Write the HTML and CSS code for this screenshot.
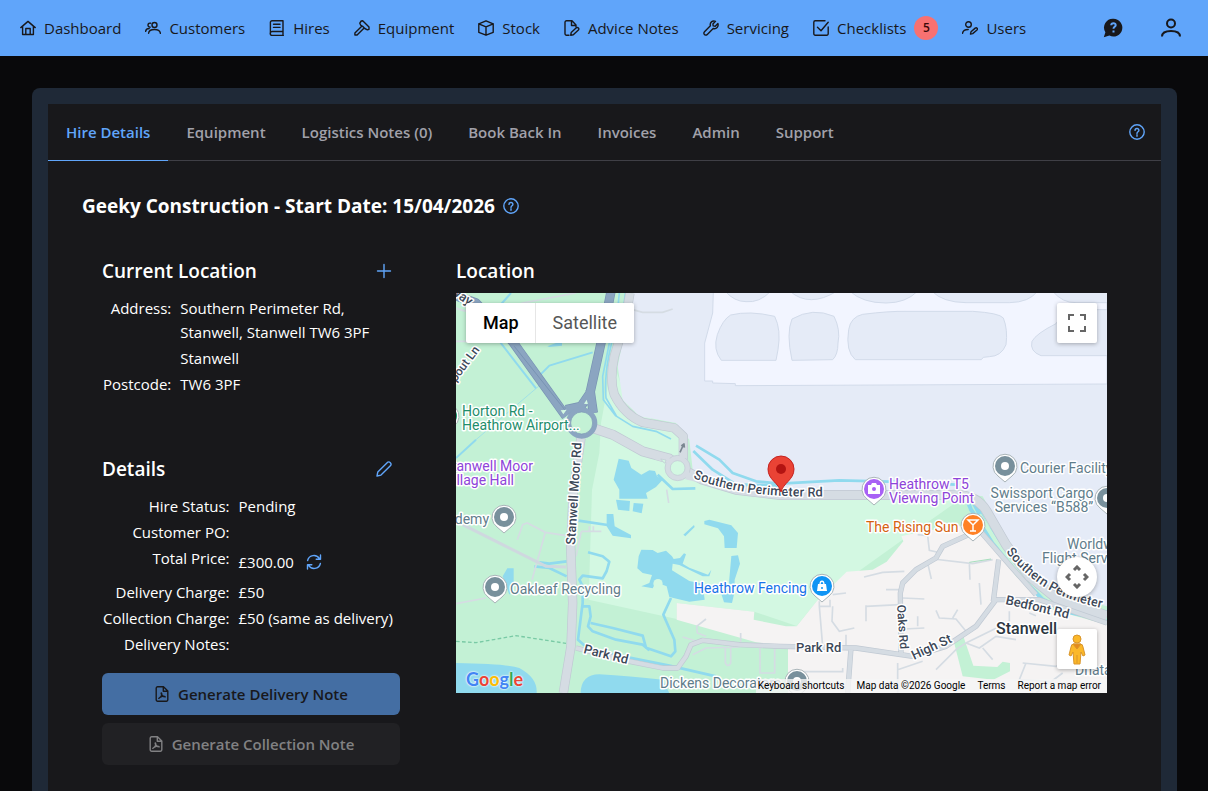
FILE: index.html
```html
<!DOCTYPE html>
<html lang="en">
<head>
    <meta charset="UTF-8">
    <meta name="viewport" content="width=device-width, initial-scale=1.0">
    <title>Hire Details</title>
    <link rel="stylesheet" href="styles.css">
</head>
<body>
    <header class="navbar">
        <nav class="nav-links">
            <a href="#"><svg class="icon" viewBox="0 0 16 16"><path d="M.8 7.6 8 1.4l7.200 6.200M2.600 6.300v8.200h10.800V6.300M5.800 14.500V8.500h4.400v6"/></svg>Dashboard</a>
            <a href="#"><svg class="icon" viewBox="0 0 16 16"><circle cx="9.500" cy="5" r="2.500"/><path d="M3.600 13.300c.2-2.400 2.200-3.800 5.900-3.800s5.600 1.400 5.900 3.800M5.600 3.200a2 2 0 1 0-.4 3.900M.6 11.300C.8 9.500 2 8.600 4.200 8.500"/></svg>Customers</a>
            <a href="#"><svg class="icon" viewBox="0 0 16 16"><path d="M14 11.500H3.200a2 2 0 0 0 0 4H14.300M14 15.300V.7H3a1.600 1.600 0 0 0-1.600 1.600v11.200M4.500 4.200h6.500M4.500 7.400h6.500"/></svg>Hires</a>
            <a href="#"><svg class="icon" viewBox="0 0 16 16"><path d="M8.700.8 15 7.100v2.200l-1.600.5-2.600-1.300-2.200-2.200-2-1.200-.8-1.900 1.400-2.200zM8 5.900.9 13v2h2.200l6.800-6.800"/></svg>Equipment</a>
            <a href="#"><svg class="icon" viewBox="0 0 16 16"><path d="m8 .8 7.200 3v8.500L8 15.200.8 12.300V3.800zM.8 3.800 8 6.900l7.200-3.100M8 6.900v8.300"/></svg>Stock</a>
            <a href="#"><svg class="icon" viewBox="0 0 16 16"><path d="M5 15.300H2.500a1.500 1.500 0 0 1-1.500-1.500V2.300A1.500 1.500 0 0 1 2.500.8H8L12 5v1.700M7.500 1v4.500H12M6.700 15.200l.5-2.600 5.100-4.800c1.600-1 3.300.8 2.100 2.200l-5.100 4.800z"/></svg>Advice Notes</a>
            <a href="#"><svg class="icon" viewBox="0 0 16 16"><path d="M12.500 1.300 9.900 3.900l.3 2 2 .3 2.700-2.700c1 3.100-1.500 5.900-4.700 5l-5.900 5.900c-1.900 1.900-4.700-.8-2.800-2.700l5.900-5.900c-.9-3.300 2-5.700 5.100-4.500z"/></svg>Servicing</a>
            <a href="#"><svg class="icon" viewBox="0 0 16 16"><path d="M12 .8H2.200A1.400 1.400 0 0 0 .8 2.200v11.600a1.400 1.400 0 0 0 1.400 1.400h11.600a1.400 1.400 0 0 0 1.400-1.400V7M4.500 7.300l3.500 3.400 7.200-8.400"/></svg>Checklists<span class="badge">5</span></a>
            <a href="#"><svg class="icon" viewBox="0 0 16 16"><circle cx="6.500" cy="4.500" r="2.800"/><path d="M.6 13.300c.2-2.400 2.300-3.700 5.600-3.800M8.500 14l.5-2.200 4.200-3.700c1.500-1 2.900.6 1.800 1.900l-4.300 3.600z"/></svg>Users</a>
        </nav>
        <div class="nav-actions">
            <button type="button" aria-label="Help">
                <svg class="icon-lg" viewBox="0 0 20 20"><path class="solid" d="M10.500.7a9 8.900 0 1 1-4.100 16.900L.8 19.300l1.600-5A8.900 8.900 0 0 1 10.500.7z"/><path class="mark" d="M8.200 7.300c.1-2.900 4.700-2.700 4.500 0-.1 1.600-2.200 1.500-2.200 3.500M10.500 12.600v1.800"/></svg>
            </button>
            <button type="button" aria-label="Account">
                <svg class="icon-lg stroke-2" viewBox="0 0 20 20"><circle cx="10" cy="5.500" r="4"/><path d="M1 18.500c.1-4.200 3.200-5.500 9-5.500s8.900 1.300 9 5.500"/></svg>
            </button>
        </div>
    </header>

    <main class="page">
        <div class="card">
            <div class="panel">
                <div class="tabs">
                    <a class="tab active" href="#">Hire Details</a>
                    <a class="tab" href="#">Equipment</a>
                    <a class="tab" href="#">Logistics Notes (0)</a>
                    <a class="tab" href="#">Book Back In</a>
                    <a class="tab" href="#">Invoices</a>
                    <a class="tab" href="#">Admin</a>
                    <a class="tab" href="#">Support</a>
                    <button type="button" class="icon-btn tabs-help" aria-label="Help"><svg class="icon" viewBox="0 0 16 16"><circle cx="8" cy="8" r="7.200"/><path d="M6 6.400c.1-2.700 4.100-2.500 3.900 0C9.800 7.800 8 7.700 8 9.500M8 10.800v1.400"/></svg></button>
                </div>

                <div class="content">
                    <h1>Geeky Construction - Start Date: 15/04/2026
                        <button type="button" class="icon-btn" aria-label="Help"><svg class="icon" viewBox="0 0 16 16"><circle cx="8" cy="8" r="7.200"/><path d="M6 6.400c.1-2.700 4.100-2.500 3.900 0C9.800 7.800 8 7.700 8 9.500M8 10.800v1.400"/></svg></button>
                    </h1>

                    <div class="columns">
                        <div class="info">
                            <section>
                                <div class="section-head">
                                    <h2>Current Location</h2>
                                    <button type="button" class="icon-btn" aria-label="Add location"><svg class="icon" viewBox="0 0 16 16"><path d="M8 1.500v13M1.500 8h13"/></svg></button>
                                </div>
                                <dl>
                                    <dt>Address:</dt>
                                    <dd>Southern Perimeter Rd,<br>Stanwell, Stanwell TW6 3PF</dd>
                                    <dt></dt>
                                    <dd>Stanwell</dd>
                                    <dt>Postcode:</dt>
                                    <dd>TW6 3PF</dd>
                                </dl>
                            </section>

                            <section>
                                <div class="section-head">
                                    <h2>Details</h2>
                                    <button type="button" class="icon-btn" aria-label="Edit details"><svg class="icon" viewBox="0 0 16 16"><path d="m1 15 .8-4.100L11.400 1.400c2.100-1.500 4.600 1.100 3.200 3.200L5 14.100z"/></svg></button>
                                </div>
                                <dl>
                                    <dt>Hire Status:</dt>
                                    <dd>Pending</dd>
                                    <dt>Customer PO:</dt>
                                    <dd></dd>
                                    <dt>Total Price:</dt>
                                    <dd class="price">£300.00
                                        <button type="button" class="icon-btn" aria-label="Recalculate price"><svg class="icon" viewBox="0 0 16 16"><path d="M1.600 6.500C3 .8 10.500-.3 13.600 4.900M14.500 1v4.300h-4.300M14.400 9.500C13 15.200 5.500 16.300 2.400 11.100M1.500 15v-4.300h4.300"/></svg></button>
                                    </dd>
                                    <dt>Delivery Charge:</dt>
                                    <dd>£50</dd>
                                    <dt>Collection Charge:</dt>
                                    <dd>£50 (same as delivery)</dd>
                                    <dt>Delivery Notes:</dt>
                                    <dd></dd>
                                </dl>
                                <div class="buttons">
                                    <button type="button" class="btn btn-primary" disabled><svg class="icon" viewBox="0 0 16 16"><path d="M9.500.8H3.600a1.400 1.400 0 0 0-1.400 1.400v11.600a1.400 1.400 0 0 0 1.400 1.400h8.800a1.400 1.400 0 0 0 1.400-1.400V5zM9.300 1v4.300h4.400M4.800 12.400C7.500 11 8.500 8 7.400 6.900c-1 .8 1.500 4 3.800 4-.8-1.200-4.500-.8-6.400 1.500z"/></svg>Generate Delivery Note</button>
                                    <button type="button" class="btn btn-muted" disabled><svg class="icon" viewBox="0 0 16 16"><path d="M9.500.8H3.600a1.400 1.400 0 0 0-1.400 1.400v11.600a1.400 1.400 0 0 0 1.400 1.400h8.800a1.400 1.400 0 0 0 1.400-1.400V5zM9.300 1v4.300h4.400M4.800 12.400C7.500 11 8.500 8 7.400 6.900c-1 .8 1.500 4 3.800 4-.8-1.200-4.500-.8-6.400 1.500z"/></svg>Generate Collection Note</button>
                                </div>
                            </section>
                        </div>

                        <section class="location">
                            <div class="section-head">
                                <h2>Location</h2>
                            </div>
                            <div class="map">
                                <svg class="map-canvas" viewBox="0 0 651 400" preserveAspectRatio="xMidYMid slice">
                                    <defs>
                                        <g id="pin"><path class="pin-edge" d="M0 16-7 10A12 12 0 1 1 7 10z"/><circle r="10"/></g>
                                        <path id="r-moor" d="M119 252 126 140"/>
                                        <path id="r-south" d="M237 185Q290 207 380 203"/>
                                        <path id="r-south2" d="M550 259C576 291 601 307 660 318"/>
                                    </defs>

                                    <!-- land, water and roads, drawn at three times the map scale -->
                                    <svg width="651" height="400" viewBox="0 0 1953 1200">
                                        <rect width="1953" height="1200" fill="#c3f1d5"/>
                                        <path fill="#d3f8e2" d="M470 200 435 390 430 480 408 591 398 920 662 978V930L895 956 1022 999 1082 925 1340 740 1540 600 700 560 690 420 520 350z"/>
                                        <path fill="#f5f3f3" d="M662 930 895 956 893 980 990 1000H1022L1082 925 1172 836 1250 830 1292 806 1342 745 1336 730 1400 715 1540 695 1600 745 1680 850 1790 950 1953 995V1200H996V1058L900 1048 662 980z"/>
                                        <path fill="#c3f1d5" d="M972 1072H996V1200H972zM1492 1040 1522 1030 1552 1118 1624 1122 1640 1106 1662 1110V1135L1612 1160 1520 1150z"/>
                                        <path fill="#e5ebf7" d="M530 0 485 220 500 320 550 370 660 390 700 440 710 530 830 585 972 600H1500L1580 610 1640 720 1720 840 1800 900 1953 940V0z"/>
                                        <path fill="#f2f5ff" stroke="#d2dbea" stroke-width="3" d="M772 -5 770 60 746 150V264H770V270L838 272V278L1953 273V-5z"/>
                                        <g fill="#e5ebf7" stroke="#d2dbea" stroke-width="3">
                                            <path d="M796 202Q770 170 784 125 800 80 824 66 880 52 956 70 976 110 966 170L960 202z"/>
                                            <path d="M1008 202Q990 120 1008 78 1070 42 1134 70 1154 110 1146 150 1146 185 1130 200z"/>
                                            <path d="M1198 200Q1168 175 1178 110 1184 72 1220 64 1300 54 1350 55H1550Q1630 60 1642 75 1656 110 1650 155 1636 190 1600 191L1582 193 1576 200z"/>
                                            <path d="M1960 188H1755Q1720 175 1728 145 1740 122 1800 92 1820 55 1860 50H1960z"/>
                                            <path d="M808 -5Q835 26 870 26 910 30 944 -5zM1002 -5Q1060 45 1142 -5zM1182 -5Q1220 30 1290 30 1350 30 1384 -5zM1428 -5Q1460 28 1530 29H1660Q1720 28 1744 -5zM1790 -5Q1820 30 1860 29H1960V-5z"/>
                                        </g>

                                        <!-- water -->
                                        <g fill="#90daee">
                                            <path d="M0 1110Q150 1112 190 1125 245 1155 242 1200H0zM374 1200Q375 1145 430 1144 520 1150 620 1160L640 1200z"/>
                                            <path d="M488 497 518 503 526 525 556 545 580 532 597 534 603 550 620 560 600 582 570 600 575 617H490V590L473 560z"/>
                                            <path d="M480 620 522 624 520 654 486 650zM533 630 562 632 557 661 530 655zM452 663H472L476 700 525 726V736L470 728 452 700z"/>
                                            <path d="M556 770 590 771 605 780 630 773 648 790 653 798 672 795 684 781 690 784 680 812 700 824 756 845 766 830 760 850 740 850 670 816 650 812 648 832 700 864 740 872 746 920 700 926 640 912 632 880 600 868 590 886 556 880 580 870 588 846 560 840 544 826 548 790z"/>
                                            <path d="M745 684 760 680 826 697 846 720 842 765H806L804 730 786 706 745 694zM682 725 714 696 716 702 688 730zM826 789 846 787 852 812 836 860 835 900 828 930 804 928 795 900 818 880zM140 850 154 826H173V885L160 905z"/>
                                            <path d="M274 160 300 150H318V158L280 162z"/>
                                        </g>
                                        <circle cx="606" cy="872" r="14" fill="#d3f8e2"/>
                                        <g fill="none" stroke="#90daee" stroke-width="8" stroke-linejoin="round">
                                            <path d="M410 178 280 218 250 248M80 80 240 286M125 45 165 0M0 495 60 440" stroke-width="6"/>
                                            <path d="M60 440 250 278" stroke-width="2"/>
                                            <path d="M490 0 482 80 458 190Q445 260 450 315L482 370 530 400 600 415 645 438M508 0 500 70M460 150 440 250 442 320 480 370" stroke-width="5"/>
                                            <path d="M605 545 650 588 718 586M712 474 770 530 840 574 972 578M720 458 790 500 830 540 900 565 972 572 1150 562 1300 566 1500 575"/>
                                            <path d="M362 682 455 696M396 778 440 790 460 806 452 834 440 856 380 848 370 860 380 880V930L366 1040 400 1070 640 1118 780 1150M380 940H400L404 970 396 1000 410 1015 480 1040 560 1055 580 1072M404 990 470 1005 560 1028 570 1064 645 1090 658 1075 655 1040 622 965 645 915M250 808 280 812 332 805M235 820 280 825 332 850"/>
                                            <path d="M1525 600 1545 650 1580 700 1680 835 1760 920 1840 958 1953 982" stroke-width="12"/>
                                            <path d="M1552 625 1590 700 1650 770 1710 840 1780 900 1850 935 1953 960" stroke-width="14"/>
                                            <path stroke="#c9f5da" d="M1570 665 1620 745 1710 855 1790 925 1870 953 1953 975" stroke-width="12"/>
                                        </g>

                                        <!-- minor streets -->
                                        <g fill="none" stroke="#d5dce3" stroke-width="5">
                                            <path d="M0 45Q80 80 200 30L360 0M0 145H60M530 50 560 58H620L650 48M184 740 200 695 214 690 268 718 330 728M268 718 245 800 228 860M376 715H436M376 715 360 790M0 932 90 915M632 590 638 630M400 700V715M412 700V715"/>
                                            <path d="M1385 725 1415 728 1420 772 1455 780M1432 798 1550 812 1610 800M1414 806 1426 858M1540 810 1542 860M1224 852 1280 838 1345 835M1170 900 1130 905M1090 925V940L1100 1060M1090 940H1122V920M1130 940 1128 985 1150 1015 1195 1005M1170 1025V1060M1230 937V985M1230 940 1330 935M1290 890H1335M1340 915 1405 918M1440 952 1450 975 1500 978 1530 1015M1490 975 1505 950M1345 1008 1405 1005M1385 1000V970M1570 870 1575 935M1660 955V985M1720 960 1740 968"/>
                                            <path d="M1002 1136H1160V1125M1325 1110V1200M1325 1130 1400 1105M1440 1130 1500 1070 1530 1050 1620 1006M1530 1050 1570 1065 1620 1030 1680 1040M1580 1065 1610 1100M1700 1110 1800 1120 1840 1095M1710 1110 1690 1160 1780 1165M1740 1200 1820 1140"/>
                                            <path d="M750 978 722 1000 724 1020 750 1030M854 1020V1048M680 1032 720 1044M710 1085 750 1065 850 1062M808 1065V1110Q816 1125 824 1110V1065M912 1065V1140H956V1065"/>
                                        </g>
                                        <path d="M20 695 150 760 240 805 270 820 330 822" fill="none" stroke="#cfd8df" stroke-width="9"/>
                                        <path d="M0 1045 60 1049 180 1028 330 1051" fill="none" stroke="#79caa5" stroke-width="4" stroke-dasharray="11 7"/>
                                        <path d="M1540 808 1605 798" fill="none" stroke="#a6dfbd" stroke-width="3"/>

                                        <!-- roads: dark casing first, fill on top -->
                                        <g fill="none" stroke-linejoin="round">
                                            <g stroke="#c0c9d3">
                                                <path d="M522 0 508 80 475 190Q460 260 475 305 505 365 560 388L655 405 682 430 682 500M375 435 352 591 344 760 350 930 345 1060 322 1200" stroke-width="28"/>
                                                <path d="M410 405 470 425 560 475 640 497 690 535 740 560 840 590 972 606H1480Q1560 600 1592 655L1650 755 1720 850 1800 915 1953 968" stroke-width="30"/>
                                                <path d="M360 1065 400 1075 520 1105 620 1125 665 1125 690 1090 705 1055 740 1042 850 1055 972 1060 1200 1065 1370 1090 1470 1060 1560 1000 1620 920H1750L1953 990M1560 715 1460 760 1440 795 1380 830 1340 870 1333 900 1335 1082M1185 1065 1175 1200M1560 700 1660 815 1740 905M1628 800 1612 925" stroke-width="16"/>
                                            </g>
                                            <g stroke="#d5dce3">
                                                <path d="M522 0 508 80 475 190Q460 260 475 305 505 365 560 388L655 405 682 430 682 500M375 435 352 591 344 760 350 930 345 1060 322 1200" stroke-width="24"/>
                                                <path d="M410 405 470 425 560 475 640 497 690 535 740 560 840 590 972 606H1480Q1560 600 1592 655L1650 755 1720 850 1800 915 1953 968" stroke-width="26"/>
                                                <path d="M360 1065 400 1075 520 1105 620 1125 665 1125 690 1090 705 1055 740 1042 850 1055 972 1060 1200 1065 1370 1090 1470 1060 1560 1000 1620 920H1750L1953 990M1560 715 1460 760 1440 795 1380 830 1340 870 1333 900 1335 1082M1185 1065 1175 1200M1560 700 1660 815 1740 905M1628 800 1612 925" stroke-width="12"/>
                                            </g>
                                            <circle cx="665" cy="525" r="38" fill="#d5dce3" stroke="#c0c9d3" stroke-width="2"/>
                                            <path d="M690 548 740 560M640 500 600 488M682 495V440" stroke="#d5dce3" stroke-width="22"/>
                                            <circle cx="665" cy="525" r="22" fill="#d3f8e2" stroke="#c0c9d3" stroke-width="2"/>
                                            <path d="M0 8 60 30 170 146 330 370M465 -5 435 150 402 300 375 340 330 350M402 290 412 360" stroke="#7893b3" stroke-width="28"/>
                                            <path d="M0 8 60 30 170 146 330 370M465 -5 435 150 402 300 375 340 330 350M402 290 412 360" stroke="#8ba5c1" stroke-width="24"/>
                                            <path d="M175 160 330 355" stroke="#7893b3" stroke-width="3"/>
                                            <circle cx="377" cy="390" r="40" stroke="#8ba5c1" stroke-width="14" fill="#c3f1d5"/>
                                            <circle cx="377" cy="390" r="33" stroke="#7893b3" stroke-width="2"/>
                                            <path d="M314 352 332 350 322 364zM384 332 392 320 396 334z" fill="#d3f8e2"/>
                                            <path d="M672 478 682 456M676 459 684 453 685 464" stroke="#7a8791" stroke-width="5"/>
                                            <path d="M614 498 630 501 626 511z" fill="#d3f8e2" stroke="#c0c9d3" stroke-width="2"/>
                                        </g>
                                    </svg>

                                    <!-- labels -->
                                    <g class="road">
                                        <text><textPath href="#r-moor">Stanwell Moor Rd</textPath></text>
                                        <text><textPath href="#r-south">Southern Perimeter Rd</textPath></text>
                                        <text><textPath href="#r-south2">Southern Perimeter</textPath></text>
                                        <text transform="translate(549 311) rotate(13)">Bedfont Rd</text>
                                        <text class="small" transform="translate(441 312) rotate(86)">Oaks Rd</text>
                                        <text transform="translate(458 367) rotate(-25)">High St</text>
                                        <text transform="translate(127 360) rotate(14)">Park Rd</text>
                                        <text x="340" y="359">Park Rd</text>
                                        <text text-anchor="end" transform="translate(13 13) rotate(35)">Way</text>
                                        <text class="small" text-anchor="end" transform="translate(24 57) rotate(-53)">Spout Ln</text>
                                    </g>
                                    <g class="place">
                                        <text class="green" x="6" y="123">Horton Rd -</text>
                                        <text class="green" x="6" y="137">Heathrow Airport...</text>
                                        <text class="purple" x="77" y="178" text-anchor="end">Stanwell Moor</text>
                                        <text class="purple" x="58" y="192" text-anchor="end">Village Hall</text>
                                        <text x="33" y="231" text-anchor="end">Academy</text>
                                        <text x="54" y="301">Oakleaf Recycling</text>
                                        <text class="blue" x="238" y="300">Heathrow Fencing</text>
                                        <text class="purple" x="433" y="196">Heathrow T5</text>
                                        <text class="purple" x="433" y="210">Viewing Point</text>
                                        <text class="orange" x="410" y="239">The Rising Sun</text>
                                        <text x="564" y="180">Courier Facility</text>
                                        <text x="586" y="205" text-anchor="middle">Swissport Cargo</text>
                                        <text x="588" y="219" text-anchor="middle">Services “B588”</text>
                                        <text x="611" y="256">Worldwide</text>
                                        <text x="586" y="270">Flight Services</text>
                                        <text x="204" y="395">Dickens Decorators</text>
                                        <text x="619" y="382">Dnata</text>
                                        <text class="town" x="540" y="341">Stanwell</text>
                                    </g>

                                    <!-- pins -->
                                    <g fill="#78909c">
                                        <use href="#pin" x="48" y="224"/><circle cx="48" cy="224" r="4" fill="#fff"/>
                                        <use href="#pin" x="39" y="294"/><circle cx="39" cy="294" r="4" fill="#fff"/>
                                        <use href="#pin" x="549" y="173"/><circle cx="549" cy="173" r="4" fill="#fff"/>
                                        <use href="#pin" x="651" y="205"/><circle cx="651" cy="205" r="4" fill="#fff"/>
                                        <use href="#pin" x="341" y="388"/><circle cx="341" cy="388" r="4" fill="#fff"/>
                                    </g>
                                    <use href="#pin" x="-9" y="123" fill="#129a6d"/>
                                    <use href="#pin" x="418" y="196" fill="#a861f5"/>
                                    <path d="M412 192h3l1-2h4l1 2h3v9h-12z" fill="#fff"/><circle cx="418" cy="196" r="2" fill="#a861f5"/>
                                    <use href="#pin" x="517" y="232" fill="#ff8126"/>
                                    <path d="M512 227h10l-5 5zM517 232v6M514 238h6" fill="none" stroke="#fff" stroke-width="1.5"/>
                                    <use href="#pin" x="366" y="293" fill="#1094f4"/>
                                    <path d="m362 291h8l1 7h-10z" fill="#fff"/><path d="M364 292c0-5 4-5 4 0" fill="none" stroke="#fff" stroke-width="1.300"/><circle cx="366" cy="295" r="1" fill="#1094f4"/>
                                    <path d="M325 199C323 190 312 187 312 176A13 13 0 0 1 338 176C338 187 327 190 325 199z" fill="#ea4335" stroke="#c5221f"/>
                                    <circle cx="325" cy="176" r="5" fill="#b31412"/>
                                </svg>

                                <div class="map-types">
                                    <button type="button" class="selected">Map</button>
                                    <button type="button">Satellite</button>
                                </div>
                                <button type="button" class="map-btn fullscreen" aria-label="Toggle fullscreen view"><svg viewBox="0 0 18 18"><path d="M1 6V1h5M12 1h5v5M17 12v5h-5M6 17H1v-5"/></svg></button>
                                <div class="map-tools">
                                    <button type="button" class="map-btn round" aria-label="Map camera controls"><svg class="camera" viewBox="0 0 24 24"><path d="m9 5 3-3 3 3M19 9l3 3-3 3M15 19l-3 3-3-3M5 15l-3-3 3-3"/></svg></button>
                                    <button type="button" class="map-btn" aria-label="Street View"><svg class="pegman" viewBox="0 0 18 32"><path d="M6 11h6q3 0 3 3l2 8-2 1-2-4-1 12H6L5 19l-2 4-2-1 2-8q0-3 3-3z"/><path class="shade" d="m5 11 4 5 4-5zM9 22v8"/><circle cx="9" cy="6" r="4"/></svg></button>
                                </div>
                                <a class="google" href="#" aria-label="Google"><span class="g-blue">G</span><span class="g-red">o</span><span class="g-yellow">o</span><span class="g-blue">g</span><span class="g-green">l</span><span class="g-red">e</span></a>
                                <div class="map-footer">
                                    <button type="button">Keyboard shortcuts</button>
                                    <span>Map data ©2026 Google</span>
                                    <a href="#">Terms</a>
                                    <a href="#">Report a map error</a>
                                </div>
                            </div>
                        </section>
                    </div>
                </div>
            </div>
        </div>
    </main>
</body>
</html>
```

FILE: styles.css
```css
* {
    margin: 0;
    padding: 0;
    box-sizing: border-box;
}

body {
    font-family: "Segoe UI", "Open Sans", sans-serif;
    font-size: 15px;
    line-height: 24px;
    background: #09090b;
    color: #fff;
    height: 100vh;
    display: flex;
    flex-direction: column;
    overflow: hidden;
}

a {
    color: inherit;
    text-decoration: none;
}

button {
    font: inherit;
    color: inherit;
    background: none;
    border: none;
    cursor: pointer;
}

.icon {
    width: 16px;
    height: 16px;
    flex: none;
    display: block;
    fill: none;
    stroke: currentColor;
    stroke-width: 1.4;
    stroke-linejoin: round;
    stroke-linecap: round;
}

/* Top navigation */
.navbar {
    height: 56px;
    flex: none;
    display: flex;
    align-items: center;
    justify-content: space-between;
    padding: 0 27px 0 20px;
    background: #60a5fa;
    color: #18181b;
}

.nav-links,
.nav-links a,
.nav-actions {
    display: flex;
    align-items: center;
}

.nav-links {
    gap: 24px;
}

.nav-links a {
    gap: 8px;
    white-space: nowrap;
}

.nav-actions {
    gap: 38px;
}

.icon-lg {
    width: 20px;
    height: 20px;
    display: block;
    fill: none;
    stroke: currentColor;
}

.icon-lg .solid {
    fill: #18181b;
    stroke: none;
}

.icon-lg .mark {
    stroke: #60a5fa;
    stroke-width: 2;
}

.stroke-2 {
    stroke-width: 2;
}

.badge {
    width: 24px;
    height: 24px;
    border-radius: 12px;
    background: #f87171;
    color: #3b0a0a;
    font-size: 12px;
    font-weight: 600;
    text-align: center;
}

/* Card */
.page {
    flex: 1;
    padding: 32px 31px 32px 32px;
    overflow-y: auto;
    scrollbar-width: none;
}

.card {
    background: #1f2937;
    border-radius: 8px;
    padding: 16px;
}

.panel {
    background: #18181b;
}

.tabs {
    display: flex;
    align-items: center;
    border-bottom: 1px solid #3f3f46;
    padding-right: 16px;
}

.tab {
    padding: 16px 18px;
    margin-bottom: -1px;
    border-bottom: 1px solid transparent;
    color: #a1a1aa;
    font-weight: 600;
    white-space: nowrap;
}

.tab.active {
    color: #60a5fa;
    border-color: #60a5fa;
}

.tabs-help {
    margin-left: auto;
}

.icon-btn {
    color: #60a5fa;
}

.content {
    padding: 31px 54px 34px 34px;
}

h1 {
    display: flex;
    align-items: center;
    gap: 8px;
    font-size: 19px;
    font-weight: 700;
    line-height: 28px;
}

.columns {
    display: grid;
    grid-template-columns: 298px minmax(0, 1fr);
    gap: 56px;
    padding: 39px 0 0 20px;
}

.info {
    display: flex;
    flex-direction: column;
    gap: 61px;
}

.section-head {
    display: flex;
    align-items: center;
    justify-content: space-between;
    padding-right: 8px;
    margin-bottom: 10px;
}

h2 {
    font-size: 19px;
    font-weight: 600;
    line-height: 24px;
}

dl {
    display: grid;
    grid-template-columns: auto 1fr;
    gap: 2px 9px;
    padding: 3px 0 0 1px;
    white-space: nowrap;
}

dt {
    text-align: right;
}

.price {
    display: flex;
    align-items: center;
    gap: 12px;
    height: 32px;
}

.buttons {
    display: flex;
    flex-direction: column;
    gap: 8px;
    margin-top: 17px;
}

.btn {
    display: flex;
    align-items: center;
    justify-content: center;
    gap: 8px;
    height: 42px;
    border-radius: 6px;
    font-weight: 600;
}

.btn-primary {
    background: #446ea3;
    color: #18181b;
}

.btn-muted {
    background: #212124;
    color: #818183;
}

/* Map */
.map {
    position: relative;
    height: 400px;
    overflow: hidden;
    background: #c3f1d5;
    font-family: Roboto, sans-serif;
}

.map-canvas {
    display: block;
    width: 100%;
    height: 100%;
}

.map-canvas text {
    paint-order: stroke;
    stroke: #fff;
    stroke-width: 3px;
    stroke-linejoin: round;
}

.pin-edge {
    fill: #fff;
    stroke: #a9b4b8;
    stroke-width: 1;
}

.road {
    fill: #3c4858;
    font-size: 13px;
    font-weight: 500;
}

.road .small {
    font-size: 12px;
}

.place {
    fill: #5f7d8b;
    font-size: 14px;
}

.place .green {
    fill: #1e8e6b;
}

.place .purple {
    fill: #8e44d9;
}

.place .blue {
    fill: #1a73e8;
}

.place .orange {
    fill: #d56311;
}

.place .town {
    fill: #2b3540;
    font-size: 16px;
    font-weight: 500;
}

.map-types {
    position: absolute;
    top: 10px;
    left: 10px;
    display: flex;
    background: #fff;
    border-radius: 2px;
    box-shadow: 0 1px 4px rgba(0, 0, 0, 0.3);
}

.map-types button {
    height: 40px;
    padding: 0 17px;
    color: #565656;
    font-size: 18px;
}

.map-types .selected {
    padding-right: 16px;
    color: #000;
    font-weight: 500;
    border-right: 1px solid #e6e6e6;
}

.map-btn {
    width: 40px;
    height: 40px;
    display: flex;
    align-items: center;
    justify-content: center;
    background: #fff;
    border-radius: 2px;
    box-shadow: 0 1px 4px rgba(0, 0, 0, 0.3);
}

.map-btn svg {
    width: 18px;
    height: 18px;
    fill: none;
    stroke: #666;
    stroke-width: 2;
}

.map-btn.round {
    border-radius: 50%;
}

.map-btn .camera {
    width: 24px;
    height: 24px;
    stroke-width: 3;
}

.map-btn .pegman {
    height: 32px;
    fill: #fbb829;
    stroke: #d9952a;
    stroke-width: 1;
}

.pegman .shade {
    fill: #e58a1c;
}

.fullscreen {
    position: absolute;
    top: 10px;
    right: 10px;
}

.map-tools {
    position: absolute;
    right: 10px;
    bottom: 24px;
    display: flex;
    flex-direction: column;
    gap: 32px;
}

.google {
    position: absolute;
    left: 10px;
    bottom: 2px;
    font-family: Lato, sans-serif;
    font-size: 18px;
    font-weight: 700;
    text-shadow: 0 0 2px #fff, 0 0 2px #fff;
}

.g-blue {
    color: #4285f4;
}

.g-red {
    color: #ea4335;
}

.g-yellow {
    color: #fbbc04;
}

.g-green {
    color: #34a853;
}

.map-footer {
    position: absolute;
    right: 0;
    bottom: 0;
    display: flex;
    background: rgba(245, 245, 245, 0.8);
    color: #000;
    font-size: 10px;
    line-height: 14px;
}

.map-footer > * {
    padding: 0 6px;
}

.map-footer > :first-child {
    padding-left: 2px;
}
```
